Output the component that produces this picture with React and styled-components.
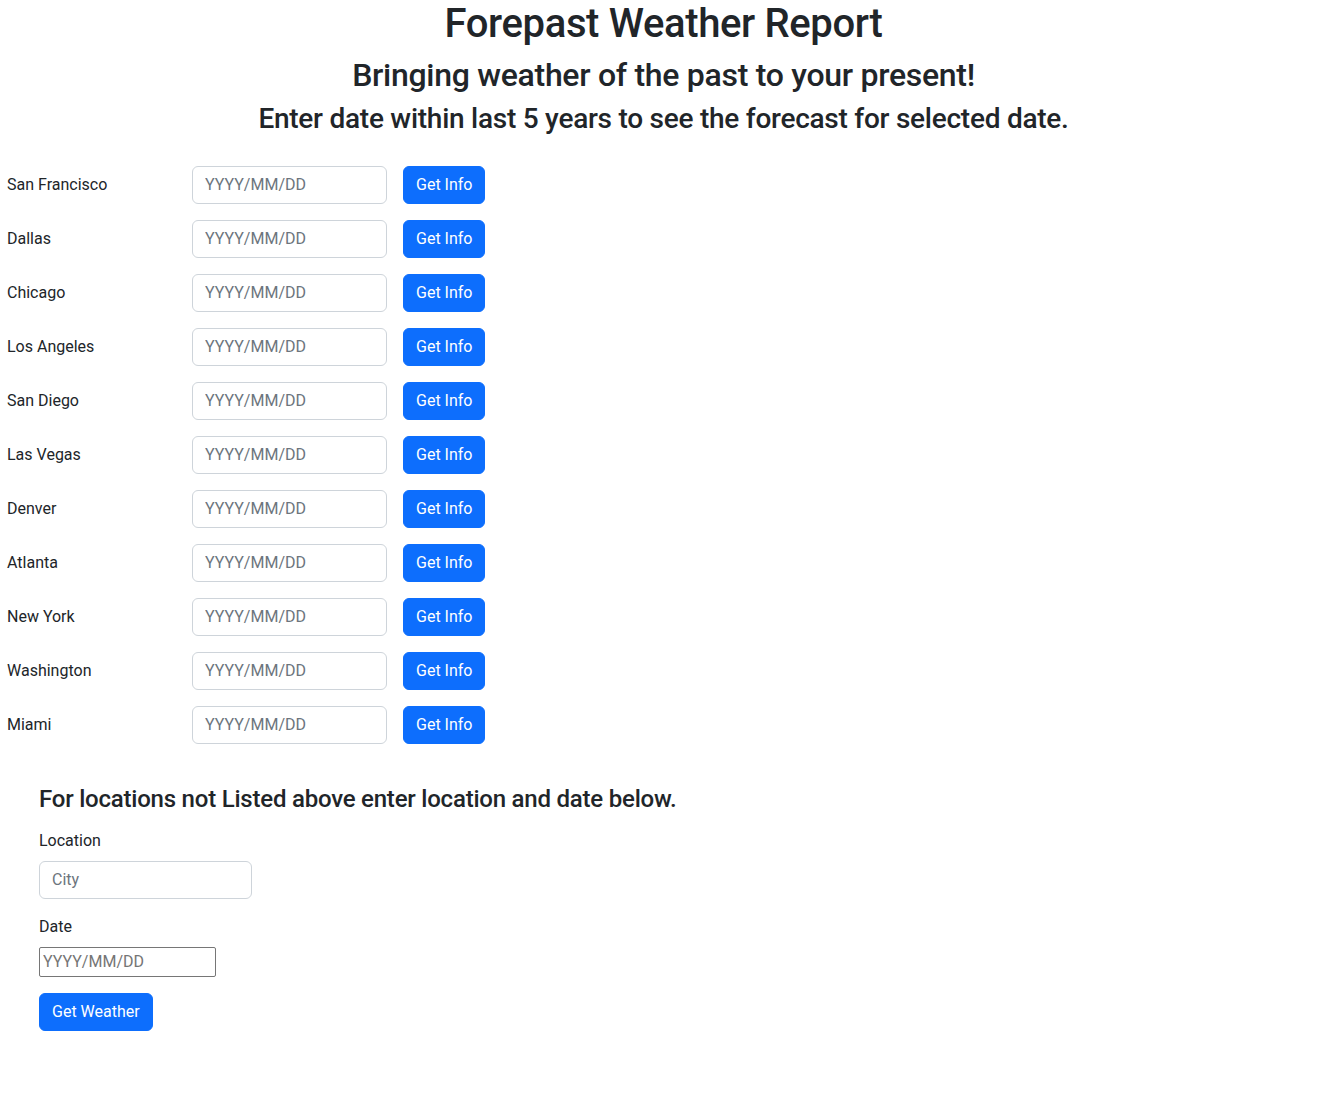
import styled, { createGlobalStyle } from "styled-components";

const FONT = `Roboto, "Liberation Sans", Arial, sans-serif`;

const GlobalStyle = createGlobalStyle`
  * { box-sizing: border-box; }
  body {
    margin: 0;
    font-family: ${FONT};
    font-size: 16px;
    line-height: 1.5;
    color: #212529;
    background: #fff;
  }
`;

const Page = styled.div`
  width: 100%;
  padding-bottom: 60px;
`;

const Header = styled.header`
  text-align: center;
`;

const Title = styled.h1`
  margin: 0 0 8px;
  font-size: 40px;
  font-weight: 500;
  line-height: 1.2;
  letter-spacing: -0.009em;
`;

const Subtitle = styled.h2`
  margin: 0 0 8px;
  font-size: 32px;
  font-weight: 500;
  line-height: 1.2;
  letter-spacing: -0.009em;
`;

const Instruction = styled.h3`
  margin: 0 0 8px;
  font-size: 28px;
  font-weight: 500;
  line-height: 1.2;
  letter-spacing: -0.009em;
`;

const CityList = styled.div`
  display: flex;
  flex-direction: column;
  gap: 16px;
  padding: 22px 0 0 7px;
`;

const CityRow = styled.form`
  display: grid;
  grid-template-columns: 169px 195px auto;
  column-gap: 16px;
  align-items: center;
  justify-content: start;
`;

const CityName = styled.label`
  font-size: 16px;
`;

const TextInput = styled.input`
  display: block;
  width: ${(p) => p.$width || "100%"};
  height: 38px;
  padding: 6px 12px;
  font-family: ${FONT};
  font-size: 16px;
  line-height: 1.5;
  color: #212529;
  background: #fff;
  border: 1px solid #ced4da;
  border-radius: 6px;
  &::placeholder {
    color: #6c757d;
  }
`;

const Button = styled.button`
  display: inline-block;
  height: 38px;
  padding: 6px 12px;
  font-family: ${FONT};
  font-size: 16px;
  line-height: 1.5;
  color: #fff;
  background: #0d6efd;
  border: 1px solid #0d6efd;
  border-radius: 6px;
  cursor: pointer;
`;

const OtherSection = styled.section`
  padding: 41px 0 0 39px;
`;

const SectionTitle = styled.h4`
  margin: 0 0 15px;
  font-size: 24px;
  font-weight: 500;
  line-height: 1.2;
  letter-spacing: -0.009em;
`;

const Field = styled.div`
  margin-bottom: 16px;
`;

const FieldLabel = styled.label`
  display: block;
  margin-bottom: 8px;
`;

const NativeInput = styled.input`
  display: block;
  width: 177px;
  height: 30px;
  padding: 1px 3px;
  font-family: ${FONT};
  font-size: 16px;
  border: 1px solid #767676;
  border-radius: 2px;
  &::placeholder {
    color: #757575;
  }
`;

const cities = [
  "San Francisco",
  "Dallas",
  "Chicago",
  "Los Angeles",
  "San Diego",
  "Las Vegas",
  "Denver",
  "Atlanta",
  "New York",
  "Washington",
  "Miami",
];

export default function App() {
  return (
    <Page>
      <GlobalStyle />
      <Header>
        <Title>Forepast Weather Report</Title>
        <Subtitle>Bringing weather of the past to your present!</Subtitle>
        <Instruction>
          Enter date within last 5 years to see the forecast for selected date.
        </Instruction>
      </Header>
      <CityList>
        {cities.map((city) => (
          <CityRow key={city} onSubmit={(e) => e.preventDefault()}>
            <CityName>{city}</CityName>
            <TextInput type="text" placeholder="YYYY/MM/DD" />
            <Button type="submit">Get Info</Button>
          </CityRow>
        ))}
      </CityList>
      <OtherSection>
        <SectionTitle>
          For locations not Listed above enter location and date below.
        </SectionTitle>
        <Field>
          <FieldLabel>Location</FieldLabel>
          <TextInput type="text" placeholder="City" $width="213px" />
        </Field>
        <Field>
          <FieldLabel>Date</FieldLabel>
          <NativeInput type="text" placeholder="YYYY/MM/DD" />
        </Field>
        <Button type="button">Get Weather</Button>
      </OtherSection>
    </Page>
  );
}
